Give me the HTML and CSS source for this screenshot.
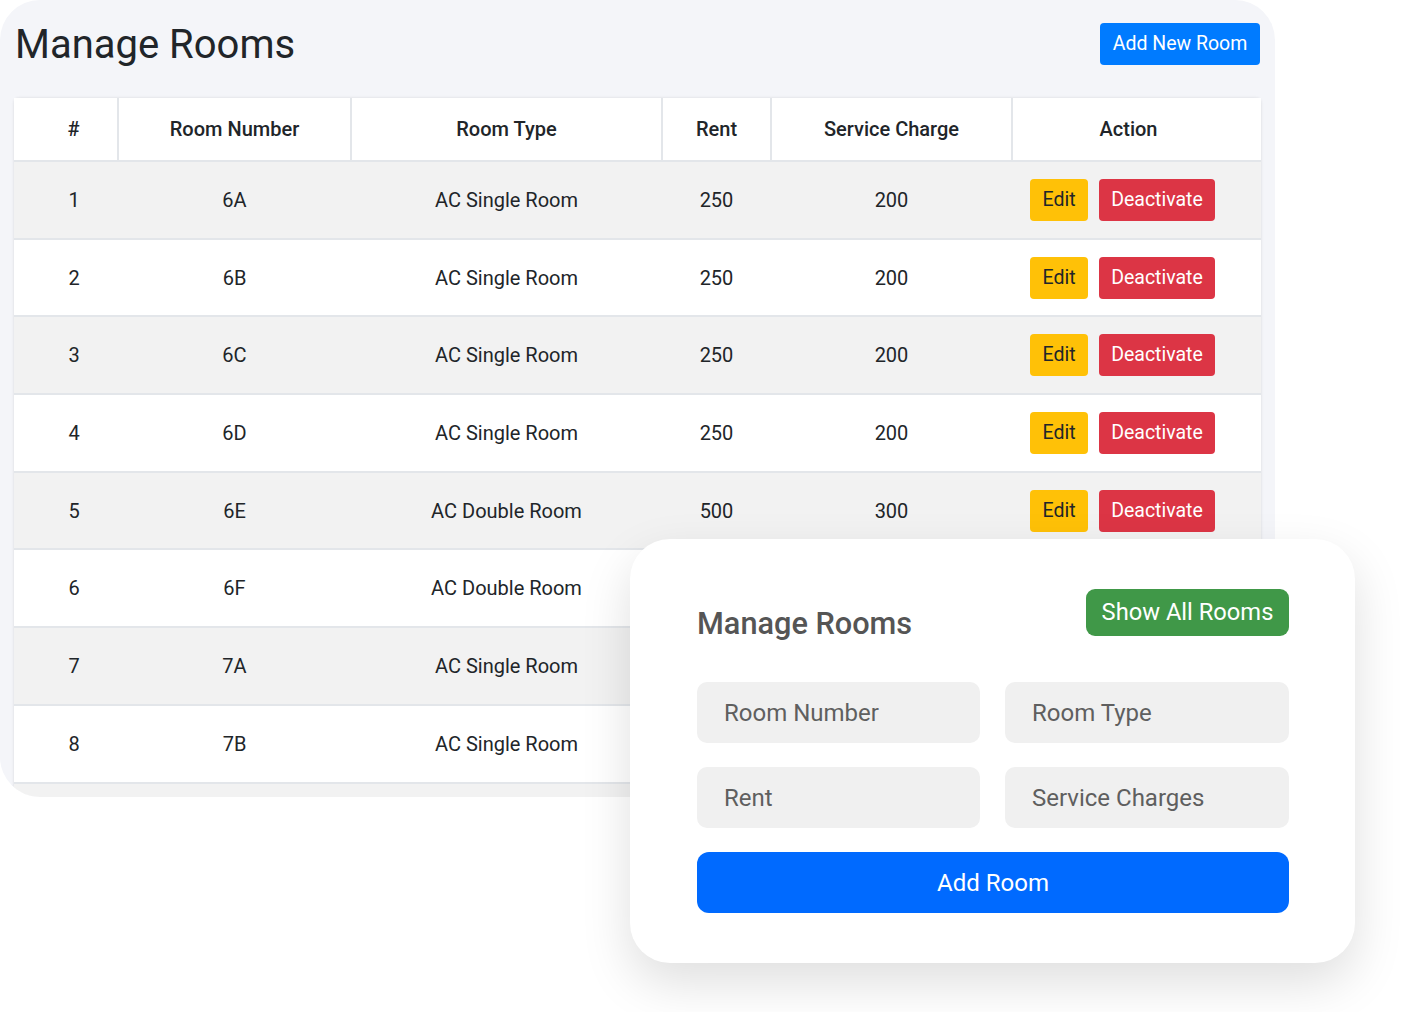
FILE: index.html
```html
<!DOCTYPE html>
<html lang="en">
<head>
<meta charset="utf-8">
<title>Manage Rooms</title>
<link rel="stylesheet" href="styles.css">
</head>
<body>
<div class="stage">
  <section class="panel">
    <header class="panel-head">
      <h1 class="title">Manage Rooms</h1>
      <button class="btn btn-primary">Add New Room</button>
    </header>
    <table class="rooms">
      <colgroup>
        <col class="c1"><col class="c2"><col class="c3"><col class="c4"><col class="c5"><col class="c6">
      </colgroup>
      <thead>
        <tr><th>#</th><th>Room Number</th><th>Room Type</th><th>Rent</th><th>Service Charge</th><th>Action</th></tr>
      </thead>
      <tbody>
        <tr><td>1</td><td>6A</td><td>AC Single Room</td><td>250</td><td>200</td><td><div class="actions"><button class="btn btn-warn">Edit</button><button class="btn btn-danger">Deactivate</button></div></td></tr>
        <tr><td>2</td><td>6B</td><td>AC Single Room</td><td>250</td><td>200</td><td><div class="actions"><button class="btn btn-warn">Edit</button><button class="btn btn-danger">Deactivate</button></div></td></tr>
        <tr><td>3</td><td>6C</td><td>AC Single Room</td><td>250</td><td>200</td><td><div class="actions"><button class="btn btn-warn">Edit</button><button class="btn btn-danger">Deactivate</button></div></td></tr>
        <tr><td>4</td><td>6D</td><td>AC Single Room</td><td>250</td><td>200</td><td><div class="actions"><button class="btn btn-warn">Edit</button><button class="btn btn-danger">Deactivate</button></div></td></tr>
        <tr><td>5</td><td>6E</td><td>AC Double Room</td><td>500</td><td>300</td><td><div class="actions"><button class="btn btn-warn">Edit</button><button class="btn btn-danger">Deactivate</button></div></td></tr>
        <tr><td>6</td><td>6F</td><td>AC Double Room</td><td>500</td><td>300</td><td><div class="actions"><button class="btn btn-warn">Edit</button><button class="btn btn-danger">Deactivate</button></div></td></tr>
        <tr><td>7</td><td>7A</td><td>AC Single Room</td><td>250</td><td>200</td><td><div class="actions"><button class="btn btn-warn">Edit</button><button class="btn btn-danger">Deactivate</button></div></td></tr>
        <tr><td>8</td><td>7B</td><td>AC Single Room</td><td>250</td><td>200</td><td><div class="actions"><button class="btn btn-warn">Edit</button><button class="btn btn-danger">Deactivate</button></div></td></tr>
        <tr class="filler"><td></td><td></td><td></td><td></td><td></td><td></td></tr>
      </tbody>
    </table>
  </section>

  <section class="form-card">
    <div class="form-head">
      <h2 class="form-title">Manage Rooms</h2>
      <button class="btn btn-success">Show All Rooms</button>
    </div>
    <div class="fields">
      <input class="field" type="text" placeholder="Room Number">
      <input class="field" type="text" placeholder="Room Type">
      <input class="field" type="text" placeholder="Rent">
      <input class="field" type="text" placeholder="Service Charges">
    </div>
    <button class="btn-add">Add Room</button>
  </section>
</div>
</body>
</html>
```

FILE: styles.css
```css
* { box-sizing: border-box; }

html, body {
  margin: 0;
  padding: 0;
  background: #ffffff;
  font-family: Roboto, "Liberation Sans", Arial, sans-serif;
  color: #212529;
}

.stage {
  position: relative;
  width: 1404px;
  height: 1012px;
  overflow: hidden;
}

.panel {
  width: 1275px;
  height: 797px;
  background: #f4f5f9;
  border-radius: 40px;
  overflow: hidden;
  padding: 0 14px;
}

.panel-head {
  height: 88px;
  display: flex;
  align-items: center;
  justify-content: space-between;
  padding-left: 1px;
  padding-right: 1px;
  margin-bottom: 10px;
}

.title {
  margin: 0;
  font-size: 40px;
  font-weight: 400;
  color: #212529;
}

.btn {
  font-family: Roboto, "Liberation Sans", Arial, sans-serif;
  border: none;
  border-radius: 4px;
  cursor: pointer;
  line-height: 1;
}

.btn-primary {
  background: #007bff;
  color: #fff;
  font-size: 19.5px;
  height: 42px;
  width: 160px;
  padding: 0;
}

.rooms {
  width: 1247px;
  border-collapse: collapse;
  table-layout: fixed;
  background: #fff;
  box-shadow: 0 0 3px rgba(0, 0, 0, 0.12);
  border-radius: 5px;
}

.c1 { width: 104px; }
.c2 { width: 233px; }
.c3 { width: 311px; }
.c4 { width: 109px; }
.c5 { width: 241px; }
.c6 { width: 249px; }

.rooms th {
  height: 63px;
  font-size: 20px;
  font-weight: 500;
  text-align: center;
  background: #fff;
  border-left: 2px solid #e3e6ea;
  border-bottom: 2px solid #e3e6ea;
  padding: 0;
}

.rooms th:first-child { border-left: none; }

.rooms th:first-child,
.rooms td:first-child { padding-left: 16px; }

.rooms th:last-child { padding-right: 17px; }

.rooms td {
  height: 77.7px;
  font-size: 20px;
  text-align: center;
  padding: 0;
  border-bottom: 2px solid #e3e6ea;
  color: #212529;
}

.rooms tbody tr:nth-child(odd) td { background: #f2f2f2; }
.rooms tbody tr:nth-child(even) td { background: #ffffff; }

.actions {
  display: flex;
  justify-content: flex-start;
  gap: 11px;
  padding-left: 18px;
}

.btn-warn {
  background: #ffc107;
  color: #212529;
  font-size: 19.5px;
  height: 42px;
  width: 58px;
  padding: 0;
}

.btn-danger {
  background: #dc3545;
  color: #fff;
  font-size: 19.5px;
  height: 42px;
  width: 116px;
  padding: 0;
}

/* floating form card */
.form-card {
  position: absolute;
  left: 630px;
  top: 539px;
  width: 725px;
  height: 424px;
  background: #fff;
  border-radius: 40px;
  box-shadow: 0 20px 50px rgba(0, 0, 0, 0.13);
  padding: 50px 66px 50px 67px;
}

.form-head {
  display: flex;
  justify-content: space-between;
  align-items: flex-start;
}

.form-title {
  margin: 17px 0 0 0;
  font-size: 30.7px;
  font-weight: 500;
  color: #555555;
  line-height: 35px;
}

.btn-success {
  background: #409848;
  color: #fff;
  font-size: 23.7px;
  height: 47px;
  width: 203px;
  border-radius: 9px;
  padding: 0;
}

.fields {
  margin-top: 41px;
  display: grid;
  grid-template-columns: 283px 284px;
  column-gap: 25px;
  row-gap: 24px;
}

.field {
  height: 61px;
  border: none;
  border-radius: 10px;
  background: #f0f0f0;
  padding: 0 0 0 27px;
  font-family: Roboto, "Liberation Sans", Arial, sans-serif;
  font-size: 24px;
  color: #5f5f5f;
  outline: none;
}

.field::placeholder { color: #5f5f5f; opacity: 1; }

.btn-add {
  display: block;
  margin-top: 24px;
  width: 592px;
  height: 61px;
  border: none;
  border-radius: 12px;
  background: #006aff;
  color: #fff;
  font-family: Roboto, "Liberation Sans", Arial, sans-serif;
  font-size: 24px;
  cursor: pointer;
}
```
